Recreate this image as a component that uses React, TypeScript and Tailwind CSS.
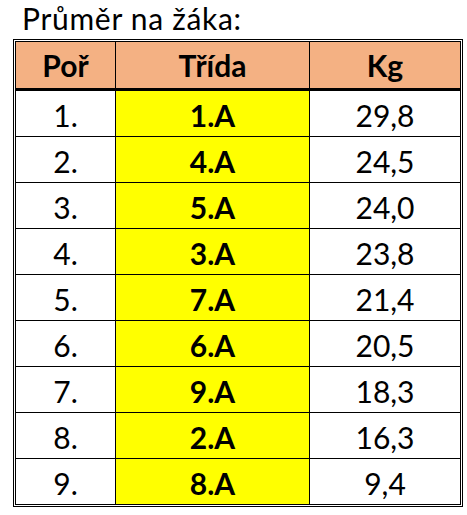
import React from 'react';

const rows = [
  { por: '1.', trida: '1.A', kg: '29,8' },
  { por: '2.', trida: '4.A', kg: '24,5' },
  { por: '3.', trida: '5.A', kg: '24,0' },
  { por: '4.', trida: '3.A', kg: '23,8' },
  { por: '5.', trida: '7.A', kg: '21,4' },
  { por: '6.', trida: '6.A', kg: '20,5' },
  { por: '7.', trida: '9.A', kg: '18,3' },
  { por: '8.', trida: '2.A', kg: '16,3' },
  { por: '9.', trida: '8.A', kg: '9,4' },
];

const App: React.FC = () => {
  return (
    <div className="w-[467px] h-[515px] bg-white font-['Lato',sans-serif] text-black">
      {/* Title */}
      <div className="pl-[22px] h-[39px] text-[30px] leading-[36px] tracking-[0.7px]">Průměr na žáka:</div>

      {/* Double-bordered table */}
      <div className="ml-[13px] w-[450px] border border-black p-px">
        <div className="border border-black">
          {/* Header */}
          <div className="grid grid-cols-[99px_193px_150px] gap-x-px bg-black border-b-[3px] border-black">
            <div className="h-[46px] bg-[#f4b183] flex items-center justify-center font-bold text-[30px]">Poř</div>
            <div className="h-[46px] bg-[#f4b183] flex items-center justify-center font-bold text-[30px]">Třída</div>
            <div className="h-[46px] bg-[#f4b183] flex items-center justify-center font-bold text-[30px]">Kg</div>
          </div>

          {/* Body */}
          <div className="grid grid-cols-[99px_193px_150px] gap-px bg-black">
            {rows.map((r) => (
              <React.Fragment key={r.por}>
                <div className="h-[45px] pt-[4px] bg-white flex items-center justify-center text-[30px]">{r.por}</div>
                <div className="h-[45px] pt-[4px] bg-[#ffff00] flex items-center justify-center font-bold text-[30px]">{r.trida}</div>
                <div className="h-[45px] pt-[4px] bg-white flex items-center justify-center text-[30px]">{r.kg}</div>
              </React.Fragment>
            ))}
          </div>
        </div>
      </div>
    </div>
  );
};

export default App;
